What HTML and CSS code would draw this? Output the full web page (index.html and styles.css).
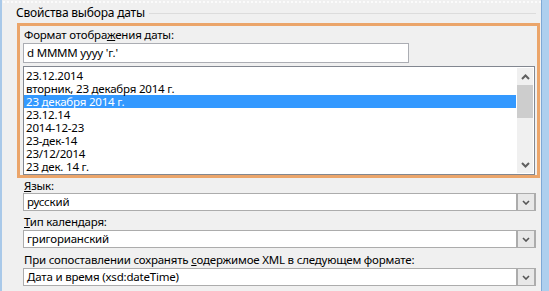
FILE: index.html
```html
<!DOCTYPE html>
<html lang="ru">
<head>
<meta charset="utf-8">
<link rel="stylesheet" href="styles.css">
</head>
<body>
<div class="frame">
  <div class="strip-left"></div>
  <div class="main">
    <div class="group-title">
      <span class="title-text">Свойства выбора даты</span>
      <span class="title-line"></span>
    </div>
    <div class="highlight-box">
      <div class="label">Формат отобра<u>ж</u>ения даты:</div>
      <div class="textbox">d MMMM yyyy 'г.'</div>
      <div class="listbox">
        <div class="list-items">
          <div class="item">23.12.2014</div>
          <div class="item">вторник, 23 декабря 2014 г.</div>
          <div class="item selected">23 декабря 2014 г.</div>
          <div class="item">23.12.14</div>
          <div class="item">2014-12-23</div>
          <div class="item">23-дек-14</div>
          <div class="item">23/12/2014</div>
          <div class="item">23 дек. 14 г.</div>
        </div>
        <div class="scrollbar">
          <div class="sb-btn">
            <svg width="9" height="6" viewBox="0 0 9 6"><path d="M1 5 L4.5 1.5 L8 5" fill="none" stroke="#606060" stroke-width="2"/></svg>
          </div>
          <div class="sb-thumb"></div>
          <div class="sb-track"></div>
          <div class="sb-btn">
            <svg width="9" height="6" viewBox="0 0 9 6"><path d="M1 1 L4.5 4.5 L8 1" fill="none" stroke="#606060" stroke-width="2"/></svg>
          </div>
        </div>
      </div>
    </div>
    <div class="field field-1">
      <div class="label"><u>Я</u>зык:</div>
      <div class="combo">
        <span class="combo-value">русский</span>
        <span class="combo-btn"><svg width="8" height="5" viewBox="0 0 8 5"><path d="M1 1 L4 4 L7 1" fill="none" stroke="#555" stroke-width="1.6"/></svg></span>
      </div>
    </div>
    <div class="field field-2">
      <div class="label"><u>Т</u>ип календаря:</div>
      <div class="combo">
        <span class="combo-value">григорианский</span>
        <span class="combo-btn"><svg width="8" height="5" viewBox="0 0 8 5"><path d="M1 1 L4 4 L7 1" fill="none" stroke="#555" stroke-width="1.6"/></svg></span>
      </div>
    </div>
    <div class="field field-3">
      <div class="label">При сопоставлении сохранять <u>с</u>одержимое XML в следующем формате:</div>
      <div class="combo">
        <span class="combo-value">Дата и время (xsd:dateTime)</span>
        <span class="combo-btn"><svg width="8" height="5" viewBox="0 0 8 5"><path d="M1 1 L4 4 L7 1" fill="none" stroke="#555" stroke-width="1.6"/></svg></span>
      </div>
    </div>
  </div>
  <div class="strip-right"></div>
</div>
</body>
</html>
```

FILE: styles.css
```css
html, body {
  margin: 0;
  padding: 0;
}
body {
  width: 549px;
  height: 291px;
  overflow: hidden;
  background: #f0f0f0;
  font-family: "Noto Sans", "DejaVu Sans", sans-serif;
  font-size: 11.5px;
  letter-spacing: -0.2px;
  color: #000;
}
u {
  text-underline-offset: 1px;
}
.frame {
  display: flex;
  height: 291px;
}
.strip-left {
  width: 2px;
  background: #a9c9e9;
  flex: none;
}
.strip-right {
  width: 7px;
  flex: none;
  background: #aecfee;
  border-left: 1px solid #7fa9d6;
}
.main {
  flex: 1;
  display: flex;
  flex-direction: column;
  background-color: #f0f0f0;
  background-image: radial-gradient(circle, #fbfbfb 0.7px, transparent 1px);
  background-size: 4px 4px;
  background-repeat: repeat-x;
}
.group-title {
  height: 23px;
  display: flex;
  align-items: center;
  padding-left: 14px;
  padding-right: 5px;
  box-sizing: border-box;
  padding-top: 2px;
}
.title-text {
  line-height: 16px;
  padding-right: 4px;
  font-size: 12px;
}
.title-line {
  flex: 1;
  height: 1px;
  background: #dcdcdc;
  margin-top: 2px;
}
.highlight-box {
  margin-left: 15px;
  width: 523px;
  box-sizing: border-box;
  border: 3px solid #eba56a;
  background: #f0f0f0;
  padding: 1px 2px 0 3px;
}
.highlight-box .label {
  padding-left: 1px;
  line-height: 16px;
  height: 16px;
}
.textbox {
  width: 386px;
  height: 20px;
  box-sizing: border-box;
  border: 1px solid #abadb3;
  background: #fff;
  padding-left: 3px;
  line-height: 18px;
  margin-bottom: 3px;
}
.listbox {
  height: 109px;
  box-sizing: border-box;
  border: 1px solid #828790;
  background: #fff;
  display: flex;
  padding: 1px 1px 1px 0;
}
.list-items {
  flex: 1;
  padding-top: 1px;
}
.item {
  height: 13px;
  line-height: 13px;
  padding-left: 2px;
}
.item.selected {
  background: #3399ff;
  color: #fff;
}
.scrollbar {
  width: 16px;
  flex: none;
  background: #f0f0f0;
  display: flex;
  flex-direction: column;
  margin-left: 1px;
}
.sb-btn {
  height: 17px;
  display: flex;
  align-items: center;
  justify-content: center;
  flex: none;
}
.sb-thumb {
  height: 33px;
  background: #cdcdcd;
  flex: none;
}
.sb-track {
  flex: 1;
}
.field {
  padding-left: 21px;
  padding-right: 5px;
}
.field .label {
  height: 15px;
  line-height: 15px;
  padding-left: 1px;
}
.field-2 .label {
  margin-top: 3px;
  height: 16px;
  line-height: 16px;
}
.field-3 .label {
  margin-top: 4px;
  height: 16px;
  line-height: 16px;
}
.combo {
  height: 18px;
  box-sizing: border-box;
  border: 1px solid #acacac;
  border-right-width: 2px;
  background: #fff;
  display: flex;
}
.combo-value {
  flex: 1;
  padding-left: 3px;
  line-height: 16px;
}
.combo-btn {
  width: 18px;
  flex: none;
  box-sizing: border-box;
  border-left: 2px solid #acacac;
  background: #e8e8e8;
  display: flex;
  align-items: center;
  justify-content: center;
}
```
